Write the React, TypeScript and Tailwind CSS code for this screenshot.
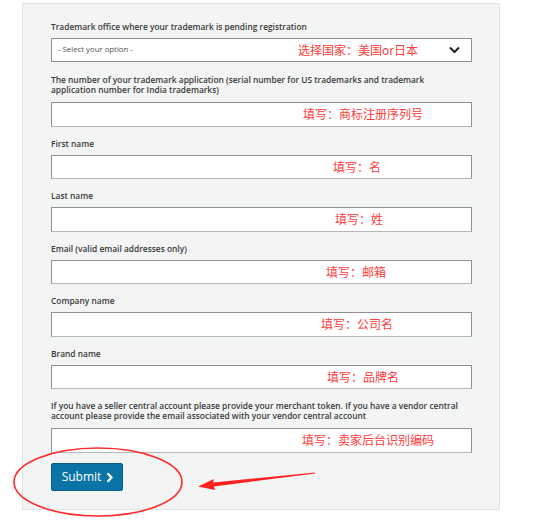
import React from "react";

const font = { fontFamily: '"Open Sans", "Noto Sans CJK SC", sans-serif' };

function Note({ text, left }: { text: string; left: number }) {
  return (
    <span
      className="absolute top-1/2 -translate-y-1/2 text-[12px] leading-none text-[#ff3b3b] whitespace-nowrap"
      style={{ left, fontFamily: '"Noto Sans CJK SC", sans-serif' }}
    >
      {text}
    </span>
  );
}

function Label({ children, mb = 6 }: { children: React.ReactNode; mb?: number }) {
  return (
    <div
      className={
        "text-[8.4px] font-semibold leading-[10px] text-[#3a3a3a] whitespace-nowrap " +
        (mb === 7 ? "mb-[7px]" : "mb-[6px]")
      }
    >
      {children}
    </div>
  );
}

function Input({ note, noteLeft }: { note: string; noteLeft: number }) {
  return (
    <div className="relative h-[24.5px] bg-white border border-[#8e9194] border-b-[#b5b8ba]">
      <Note text={note} left={noteLeft} />
    </div>
  );
}

export default function App() {
  return (
    <div className="w-[549px] h-[522px] bg-white pt-[3px] pl-[22px]" style={font}>
      <div className="w-[478px] h-[507px] bg-[#f3f4f4] border border-[#e2e4e4] pl-[28px] pr-[27px] pt-[18px] flex flex-col">
        <Label>Trademark office where your trademark is pending registration</Label>
        <div className="relative h-[24px] bg-white border border-[#8e9194] flex items-center pl-[6px]">
          <span className="text-[7.8px] text-[#555]">- Select your option -</span>
          <Note text="选择国家：美国or日本" left={246} />
          <svg
            className="absolute right-[11px] top-1/2 -translate-y-1/2"
            width="11"
            height="7"
            viewBox="0 0 11 7"
          >
            <path d="M1 1 L5.5 5.5 L10 1" fill="none" stroke="#222" strokeWidth="2" />
          </svg>
        </div>

        <div className="mt-[13px]">
          <Label mb={7}>
            The number of your trademark application (serial number for US trademarks and trademark
            <br />
            application number for India trademarks)
          </Label>
          <Input note="填写：商标注册序列号" noteLeft={251} />
        </div>

        <div className="mt-[12px]">
          <Label>First name</Label>
          <Input note="填写：名" noteLeft={281} />
        </div>
        <div className="mt-[12px]">
          <Label>Last name</Label>
          <Input note="填写：姓" noteLeft={283} />
        </div>
        <div className="mt-[12px]">
          <Label>Email (valid email addresses only)</Label>
          <Input note="填写：邮箱" noteLeft={274} />
        </div>
        <div className="mt-[12px]">
          <Label>Company name</Label>
          <Input note="填写：公司名" noteLeft={269} />
        </div>
        <div className="mt-[12px]">
          <Label>Brand name</Label>
          <Input note="填写：品牌名" noteLeft={275} />
        </div>
        <div className="mt-[12px]">
          <Label mb={7}>
            If you have a seller central account please provide your merchant token. If you have a vendor central
            <br />
            account please provide the email associated with your vendor central account
          </Label>
          <Input note="填写：卖家后台识别编码" noteLeft={250} />
        </div>

        <div className="mt-[10.5px]">
          <button className="h-[28px] w-[72px] bg-[#0b74a6] border border-[#0a5f87] rounded-[2px] text-white text-[12px] flex items-center justify-center gap-[5px] pl-[1px]">
            <span>Submit</span>
            <svg width="7" height="11" viewBox="0 0 7 11">
              <path d="M1.5 1.2 L5.5 5.5 L1.5 9.8" fill="none" stroke="#fff" strokeWidth="2.2" />
            </svg>
          </button>
        </div>
      </div>
      <svg className="absolute left-0 top-0 pointer-events-none" width="549" height="522">
        <ellipse cx="98" cy="482" rx="84" ry="34" fill="none" stroke="#ff2a2a" strokeWidth="1.6" />
        <path d="M315 472.5 L213 482.5 L214 479 L198 486.5 L215 490 L214 486.5 L315 473.5 Z" fill="#ff2020" />
      </svg>
    </div>
  );
}
